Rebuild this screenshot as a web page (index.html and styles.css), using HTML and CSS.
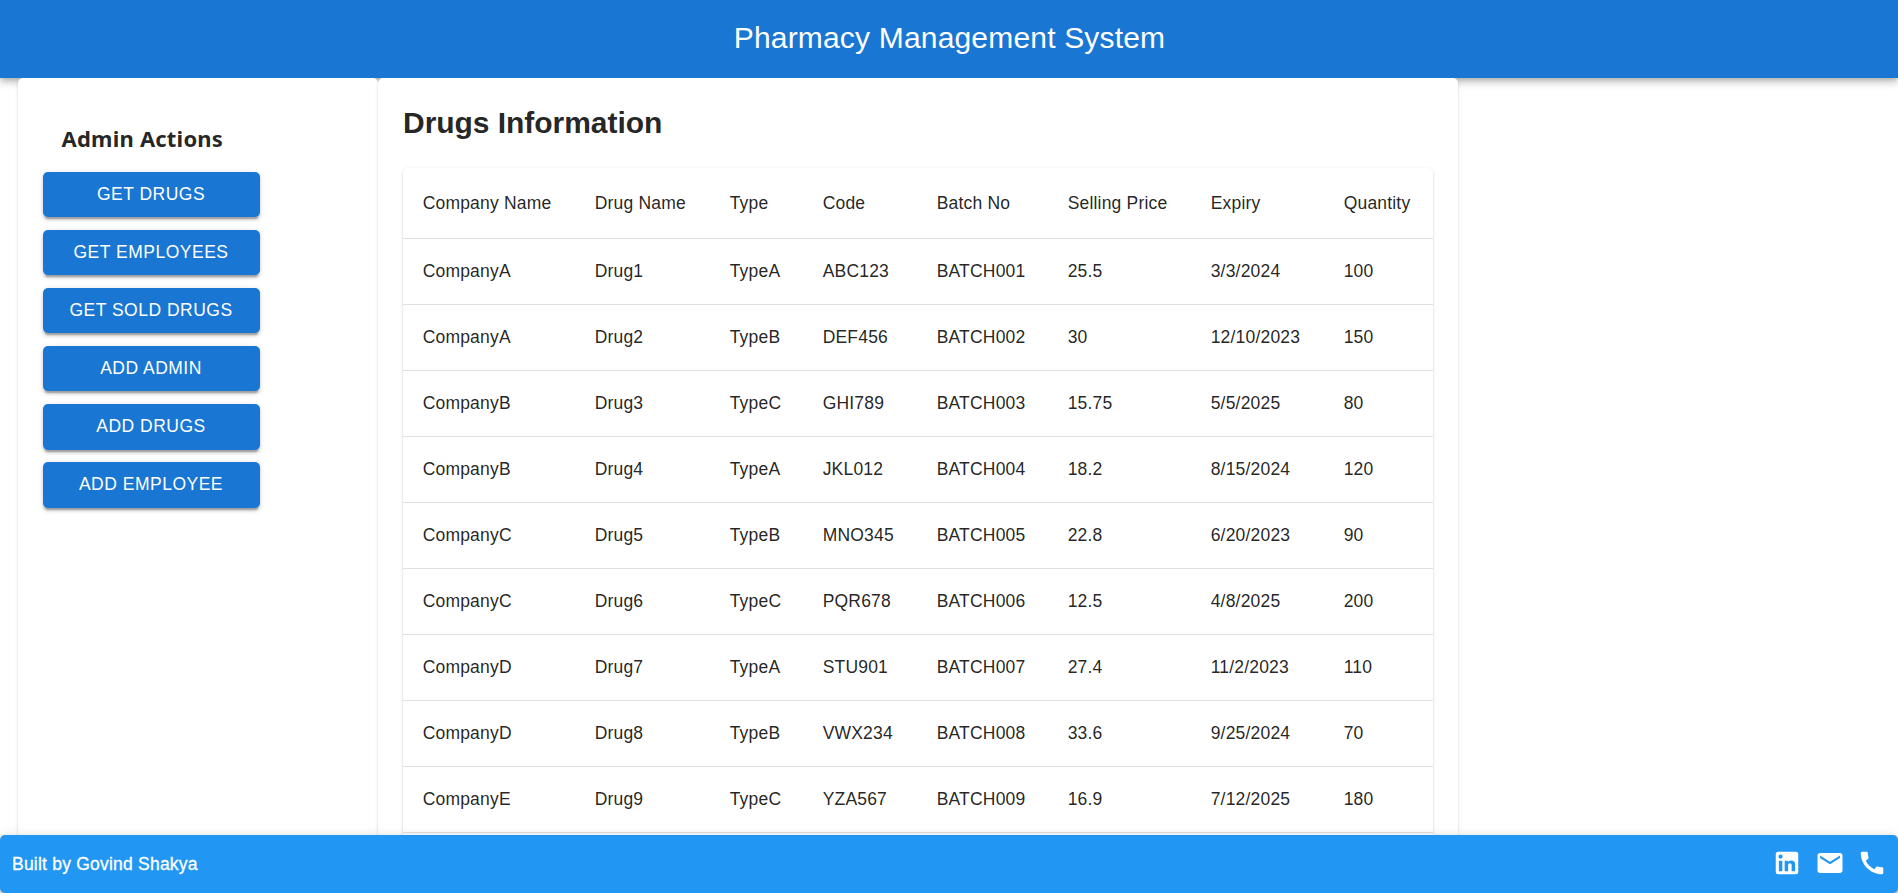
FILE: index.html
```html
<!DOCTYPE html>
<html lang="en">
<head>
<meta charset="utf-8">
<title>Pharmacy Management System</title>
<link rel="stylesheet" href="styles.css">
</head>
<body>
<header class="appbar"><h1 class="appbar-title">Pharmacy Management System</h1></header>
<main class="content">
  <aside class="paper sidebar">
    <h2 class="sidebar-title">Admin Actions</h2>
    <nav class="actions">
      <button class="btn">Get Drugs</button>
      <button class="btn">Get Employees</button>
      <button class="btn">Get Sold Drugs</button>
      <button class="btn">Add Admin</button>
      <button class="btn">Add Drugs</button>
      <button class="btn">Add Employee</button>
    </nav>
  </aside>
  <section class="paper main-panel">
    <h2 class="panel-title">Drugs Information</h2>
    <div class="paper table-wrap">
      <table class="table">
        <colgroup><col class="c1"><col class="c2"><col class="c3"><col class="c4"><col class="c5"><col class="c6"><col class="c7"><col class="c8"></colgroup>
        <thead>
          <tr><th>Company Name</th><th>Drug Name</th><th>Type</th><th>Code</th><th>Batch No</th><th>Selling Price</th><th>Expiry</th><th>Quantity</th></tr>
        </thead>
        <tbody>
          <tr><td>CompanyA</td><td>Drug1</td><td>TypeA</td><td>ABC123</td><td>BATCH001</td><td>25.5</td><td>3/3/2024</td><td>100</td></tr>
          <tr><td>CompanyA</td><td>Drug2</td><td>TypeB</td><td>DEF456</td><td>BATCH002</td><td>30</td><td>12/10/2023</td><td>150</td></tr>
          <tr><td>CompanyB</td><td>Drug3</td><td>TypeC</td><td>GHI789</td><td>BATCH003</td><td>15.75</td><td>5/5/2025</td><td>80</td></tr>
          <tr><td>CompanyB</td><td>Drug4</td><td>TypeA</td><td>JKL012</td><td>BATCH004</td><td>18.2</td><td>8/15/2024</td><td>120</td></tr>
          <tr><td>CompanyC</td><td>Drug5</td><td>TypeB</td><td>MNO345</td><td>BATCH005</td><td>22.8</td><td>6/20/2023</td><td>90</td></tr>
          <tr><td>CompanyC</td><td>Drug6</td><td>TypeC</td><td>PQR678</td><td>BATCH006</td><td>12.5</td><td>4/8/2025</td><td>200</td></tr>
          <tr><td>CompanyD</td><td>Drug7</td><td>TypeA</td><td>STU901</td><td>BATCH007</td><td>27.4</td><td>11/2/2023</td><td>110</td></tr>
          <tr><td>CompanyD</td><td>Drug8</td><td>TypeB</td><td>VWX234</td><td>BATCH008</td><td>33.6</td><td>9/25/2024</td><td>70</td></tr>
          <tr><td>CompanyE</td><td>Drug9</td><td>TypeC</td><td>YZA567</td><td>BATCH009</td><td>16.9</td><td>7/12/2025</td><td>180</td></tr>
        </tbody>
      </table>
    </div>
  </section>
</main>
<footer class="footer">
  <span class="credit">Built by Govind Shakya</span>
  <div class="social">
    <svg class="icon" viewBox="0 0 24 24"><path d="M19 3a2 2 0 0 1 2 2v14a2 2 0 0 1-2 2H5a2 2 0 0 1-2-2V5a2 2 0 0 1 2-2h14m-.5 15.5v-5.3a3.26 3.26 0 0 0-3.26-3.26c-.85 0-1.84.52-2.32 1.3v-1.11h-2.79v8.37h2.79v-4.93c0-.77.62-1.4 1.39-1.4a1.4 1.4 0 0 1 1.4 1.4v4.93h2.79M6.88 8.56a1.68 1.68 0 0 0 1.68-1.68c0-.93-.75-1.69-1.68-1.69a1.69 1.69 0 0 0-1.69 1.69c0 .93.76 1.68 1.69 1.68m1.39 9.94v-8.37H5.5v8.37h2.77z"/></svg>
    <svg class="icon" viewBox="0 0 24 24"><path d="M20 4H4c-1.1 0-1.99.9-1.99 2L2 18c0 1.1.9 2 2 2h16c1.1 0 2-.9 2-2V6c0-1.1-.9-2-2-2zm0 4l-8 5-8-5V6l8 5 8-5v2z"/></svg>
    <svg class="icon" viewBox="0 0 24 24"><path d="M20.01 15.38c-1.23 0-2.42-.2-3.53-.56-.35-.12-.74-.03-1.01.24l-1.57 1.97c-2.83-1.35-5.48-3.9-6.89-6.83l1.95-1.66c.27-.28.35-.67.24-1.02-.37-1.11-.56-2.3-.56-3.53 0-.54-.45-.99-.99-.99H4.19C3.65 3 3 3.24 3 3.99 3 13.28 10.73 21 20.01 21c.71 0 .99-.63.99-1.18v-3.45c0-.54-.45-.99-.99-.99z"/></svg>
  </div>
</footer>
</body>
</html>
```
FILE: styles.css
```css
* { box-sizing: border-box; }
body {
  margin: 0;
  height: 893px;
  overflow: hidden;
  display: flex;
  flex-direction: column;
  background: #fff;
  color: rgba(0, 0, 0, 0.87);
  font-family: "Liberation Sans", Arial, sans-serif;
}
.appbar {
  flex: none;
  height: 78px;
  padding: 18px 0 0 1px;
  background: #1976d2;
  color: #fff;
  text-align: center;
  box-shadow: 0 2.5px 5px -1.25px rgba(0,0,0,.2), 0 5px 6.25px rgba(0,0,0,.14), 0 1.25px 12.5px rgba(0,0,0,.12);
}
.appbar-title {
  margin: 0;
  font-size: 30px;
  font-weight: 400;
  line-height: 40px;
  letter-spacing: 0.18px;
}
.content {
  flex: 1;
  min-height: 0;
  overflow: hidden;
  display: flex;
  padding-left: 18px;
}
.paper {
  background: #fff;
  border-radius: 5px;
  box-shadow: 0 2.5px 1.25px -1.25px rgba(0,0,0,.2), 0 1.25px 1.25px rgba(0,0,0,.14), 0 1.25px 3.75px rgba(0,0,0,.12);
}
.sidebar, .main-panel {
  height: 900px;
  padding: 25px;
}
.sidebar { width: 360px; }
.main-panel { width: 1080px; }
.sidebar-title {
  margin: 18.6px 0 18px 18.5px;
  font: 700 22px/32px "Noto Sans", "Open Sans", sans-serif;
  letter-spacing: 0.2px;
}
.actions {
  display: flex;
  flex-direction: column;
  gap: 12.5px;
  width: 217px;
}
.btn {
  height: 45.6px;
  padding: 0 1px 1px 0;
  border: 0;
  border-radius: 5px;
  background: #1976d2;
  color: #fff;
  font: 500 17.5px/30px "Liberation Sans", Arial, sans-serif;
  letter-spacing: 0.02857em;
  text-transform: uppercase;
  box-shadow: 0 3.75px 1.25px -2.5px rgba(0,0,0,.2), 0 2.5px 2.5px rgba(0,0,0,.14), 0 1.25px 6.25px rgba(0,0,0,.12);
}
.panel-title {
  margin: 0 0 25px;
  font-size: 30px;
  font-weight: 700;
  line-height: 40px;
  letter-spacing: -0.04px;
}
.table-wrap { height: 800px; }
.table {
  width: 1030px;
  table-layout: fixed;
  border-collapse: separate;
  border-spacing: 0;
}
.c1 { width: 172px; }
.c2 { width: 135px; }
.c3 { width: 93px; }
.c4 { width: 114px; }
.c5 { width: 131px; }
.c6 { width: 143px; }
.c7 { width: 133px; }
.c8 { width: 109px; }
.table th, .table td {
  height: 66px;
  padding: 0 0 0 19.7px;
  border-bottom: 1px solid #e0e0e0;
  font-size: 17.5px;
  font-weight: 400;
  line-height: 25px;
  letter-spacing: 0.01071em;
  text-align: left;
  white-space: nowrap;
}
.table th { height: 71px; }
.footer {
  position: relative;
  flex: none;
  height: 58px;
  padding: 0 11px 2px 12px;
  display: flex;
  align-items: center;
  justify-content: space-between;
  border-radius: 5px;
  background: #2196f3;
  color: #fff;
  box-shadow: 0 2.5px 5px -1.25px rgba(0,0,0,.2), 0 5px 6.25px rgba(0,0,0,.14), 0 1.25px 12.5px rgba(0,0,0,.12);
}
.credit {
  padding-top: 2px;
  font-size: 17.5px;
  letter-spacing: 0.0125em;
  -webkit-text-stroke: 0.3px currentColor;
}
.social { display: flex; gap: 12.5px; }
.icon { width: 30px; height: 30px; fill: currentColor; }
```
